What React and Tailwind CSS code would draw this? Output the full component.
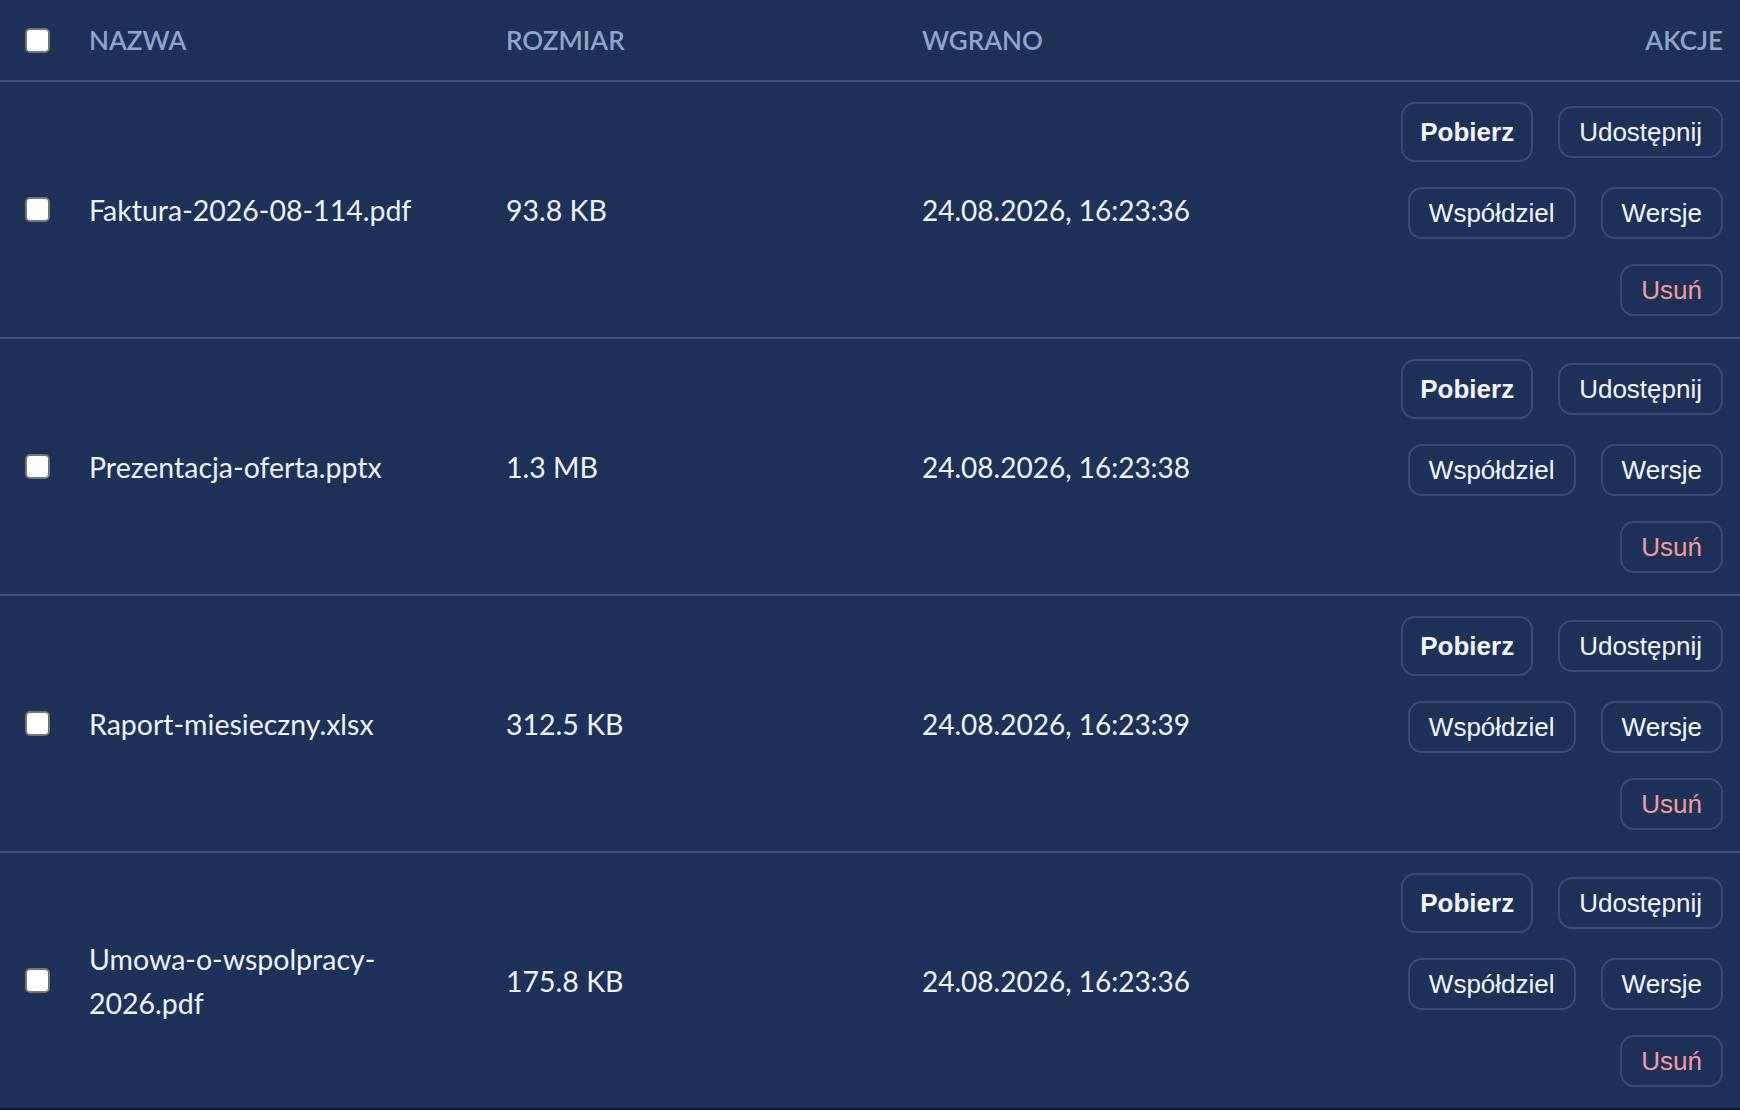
const files = [
  { name: "Faktura-2026-08-114.pdf", size: "93.8 KB", uploaded: "24.08.2026, 16:23:36" },
  { name: "Prezentacja-oferta.pptx", size: "1.3 MB", uploaded: "24.08.2026, 16:23:38" },
  { name: "Raport-miesieczny.xlsx", size: "312.5 KB", uploaded: "24.08.2026, 16:23:39" },
  { name: "Umowa-o-wspolpracy-2026.pdf", size: "175.8 KB", uploaded: "24.08.2026, 16:23:36" },
];

const cols = "grid grid-cols-[89px_417px_416px_418px_1fr]";

function Check() {
  return (
    <input
      type="checkbox"
      className="ml-[25px] h-[25px] w-[25px] appearance-none rounded-[5px] border-[2px] border-[#767676] bg-white"
    />
  );
}

function Btn({ children, strong, danger }) {
  const base =
    "rounded-[14px] border-[2px] border-[#3a4d71] bg-transparent text-[26px] leading-[30px] [font-family:'Liberation_Sans',Arial,sans-serif]";
  if (strong) {
    return <button className={`${base} px-[17px] py-[13px] text-[24px] font-bold text-[#f3f6fb]`}>{children}</button>;
  }
  return (
    <button className={`${base} px-[19px] py-[9px] ${danger ? "text-[#f79a9c]" : "text-[#f3f6fb]"}`}>{children}</button>
  );
}

export default function App() {
  return (
    <div className="min-h-[1110px] bg-[#0f1a2f] [font-family:Lato,'Noto_Sans',sans-serif]">
      <div className="bg-[#1e3158]">
        <div className={`${cols} h-[82px] items-center border-b-[2px] border-[#415474] text-[26px] font-semibold text-[#8fa6cc]`}>
          <Check />
          <div>NAZWA</div>
          <div>ROZMIAR</div>
          <div>WGRANO</div>
          <div className="pr-[17px] text-right">AKCJE</div>
        </div>

        {files.map((f, i) => (
          <div
            key={f.name}
            className={`${cols} items-center text-[28.5px] leading-[44px] text-[#eef2f9] ${
              i < files.length - 1 ? "border-b-[2px] border-[#415474]" : ""
            }`}
          >
            <Check />
            <div className="w-[380px] break-words">{f.name}</div>
            <div>{f.size}</div>
            <div className="text-[28px]">{f.uploaded}</div>
            <div className="flex flex-wrap items-center justify-end gap-[25px] pb-[21px] pr-[17px] pt-[20px]">
              <Btn strong>Pobierz</Btn>
              <Btn>Udostępnij</Btn>
              <Btn>Współdziel</Btn>
              <Btn>Wersje</Btn>
              <Btn danger>Usuń</Btn>
            </div>
          </div>
        ))}
      </div>
    </div>
  );
}
